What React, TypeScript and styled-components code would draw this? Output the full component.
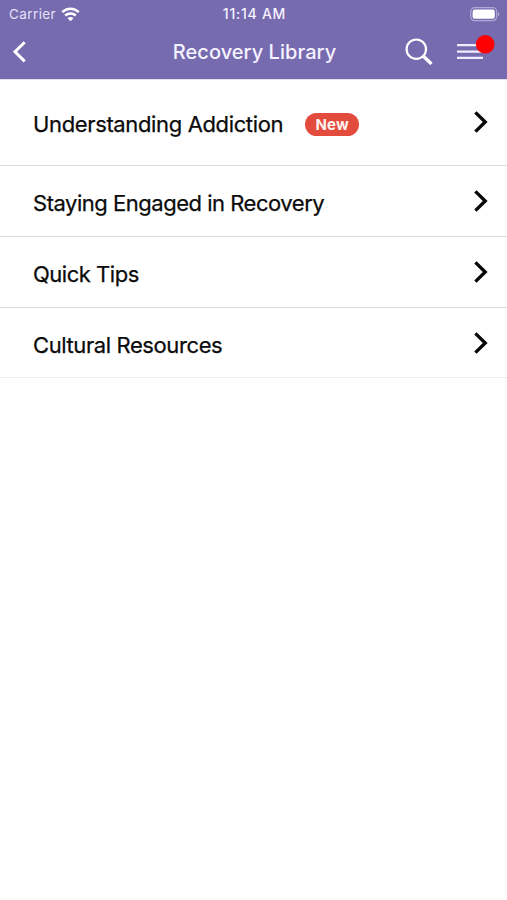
import React from 'react';
import styled, { createGlobalStyle } from 'styled-components';

const GlobalStyle = createGlobalStyle`
  * { box-sizing: border-box; }
  body {
    margin: 0;
    background: #fff;
    font-family: Inter, "Liberation Sans", sans-serif;
  }
`;

const Screen = styled.div`
  min-height: 100vh;
  background: #fff;
`;

const Header = styled.header`
  height: 79px;
  background: #776bb0;
  color: #f5f2ff;
  box-shadow: 0 1px 0 #e3dff1;
`;

const StatusBar = styled.div`
  height: 27px;
  display: grid;
  grid-template-columns: 1fr auto 1fr;
  align-items: center;
  padding: 0 7px 0 9px;
`;

const Carrier = styled.div`
  display: flex;
  align-items: center;
  gap: 5px;
  font-size: 13.5px;
  line-height: 28px;
  letter-spacing: 0.4px;
  color: #e6e1f6;
`;

const Clock = styled.div`
  font-size: 14px;
  font-weight: 500;
  line-height: 28px;
  letter-spacing: 0.75px;
`;

const Battery = styled.div`
  display: flex;
  justify-content: flex-end;
`;

const NavBar = styled.nav`
  height: 52px;
  display: grid;
  grid-template-columns: 1fr auto 1fr;
  padding: 0 8px 0 10px;
`;

const IconButton = styled.button`
  display: flex;
  padding: 0;
  border: 0;
  background: none;
  color: #fff;
`;

const BackSlot = styled.div`
  padding-top: 13px;
`;

const Title = styled.h1`
  margin: 0;
  font-size: 20px;
  font-weight: 500;
  line-height: 50px;
  letter-spacing: 0.05px;
`;

const Actions = styled.div`
  display: flex;
  justify-content: flex-end;
  align-items: flex-start;
  gap: 23px;
  padding-top: 8px;
`;

const List = styled.ul`
  margin: 0;
  padding: 0;
  list-style: none;
`;

const Row = styled.li<{ $height: number; $last?: boolean }>`
  height: ${({ $height }) => $height}px;
  display: flex;
  align-items: center;
  padding: ${({ $last }) => ($last ? 5 : 4)}px 18px 0 33px;
  border-bottom: 1px solid ${({ $last }) => ($last ? '#ececec' : '#dcdcdc')};
`;

const Label = styled.span<{ $spacing: number }>`
  font-size: 22px;
  line-height: 30px;
  color: #0b0b0b;
  -webkit-text-stroke: 0.25px #0b0b0b;
  letter-spacing: ${({ $spacing }) => $spacing}px;
  white-space: nowrap;
`;

const Badge = styled.span`
  width: 54px;
  height: 23px;
  margin-left: 22px;
  border-radius: 12px;
  background: #e34b3d;
  color: #fff3f0;
  font-size: 15px;
  font-weight: 700;
  line-height: 23px;
  letter-spacing: 0.2px;
  text-align: center;
`;

const Chevron = styled.svg`
  margin: -5px 0 0 auto;
`;

interface Item {
  label: string;
  height: number;
  spacing: number;
  isNew?: boolean;
}

const items: Item[] = [
  { label: 'Understanding Addiction', height: 87, spacing: -0.36, isNew: true },
  { label: 'Staying Engaged in Recovery', height: 71, spacing: -0.48 },
  { label: 'Quick Tips', height: 71, spacing: -0.48 },
  { label: 'Cultural Resources', height: 70, spacing: -0.4 },
];

const WifiIcon = () => (
  <svg width="19" height="15" viewBox="0 0 19 15" fill="none" stroke="#fff" strokeWidth="2.5">
    <path d="M1.2 5.2C6 .6 13 .6 17.8 5.2" />
    <path d="M4.2 8.5C7.2 5.7 11.8 5.7 14.8 8.5" />
    <path d="M6.5 11.2Q9.5 8.8 12.5 11.2L9.5 14.2Z" fill="#fff" stroke="none" />
  </svg>
);

const BatteryIcon = () => (
  <svg width="30" height="15" viewBox="0 0 30 15">
    <rect x="0.7" y="0.7" width="26" height="13" rx="4" fill="none" stroke="#b1a8d4" strokeWidth="1.2" />
    <rect x="2.6" y="2.6" width="22.2" height="9.2" rx="2.3" fill="#fff" />
    <path d="M28 5Q30.6 7.2 28 9.4Z" fill="#b1a8d4" />
  </svg>
);

const BackIcon = () => (
  <svg width="16" height="24" viewBox="0 0 16 24" fill="none" stroke="currentColor" strokeWidth="3">
    <path d="M14.7 2.2L5 11.8L14.7 21.4" />
  </svg>
);

const SearchIcon = () => (
  <svg width="29" height="30" viewBox="0 0 29 30" fill="none" stroke="currentColor">
    <circle cx="11.3" cy="14.2" r="9.7" strokeWidth="2.2" />
    <path d="M18.4 21.2L26.5 28.9" strokeWidth="3.4" />
  </svg>
);

const MenuIcon = () => (
  <svg width="42" height="30" viewBox="0 0 42 30">
    <path d="M0 10.1H26M0 16.6H26M0 22.9H26" stroke="#f1edff" strokeWidth="2.2" />
    <circle cx="28.2" cy="9.3" r="9.3" fill="#ff0000" />
  </svg>
);

export default function App() {
  return (
    <Screen>
      <GlobalStyle />
      <Header>
        <StatusBar>
          <Carrier>
            Carrier
            <WifiIcon />
          </Carrier>
          <Clock>11:14 AM</Clock>
          <Battery>
            <BatteryIcon />
          </Battery>
        </StatusBar>
        <NavBar>
          <BackSlot>
            <IconButton aria-label="Back">
              <BackIcon />
            </IconButton>
          </BackSlot>
          <Title>Recovery Library</Title>
          <Actions>
            <IconButton aria-label="Search">
              <SearchIcon />
            </IconButton>
            <IconButton aria-label="Menu">
              <MenuIcon />
            </IconButton>
          </Actions>
        </NavBar>
      </Header>
      <List>
        {items.map((item, index) => (
          <Row key={item.label} $height={item.height} $last={index === items.length - 1}>
            <Label $spacing={item.spacing}>{item.label}</Label>
            {item.isNew && <Badge>New</Badge>}
            <Chevron width="16" height="24" viewBox="0 0 16 24" fill="none" stroke="#080808" strokeWidth="3.4">
              <path d="M2.4 2.4L12.2 12L2.4 21.6" />
            </Chevron>
          </Row>
        ))}
      </List>
    </Screen>
  );
}
